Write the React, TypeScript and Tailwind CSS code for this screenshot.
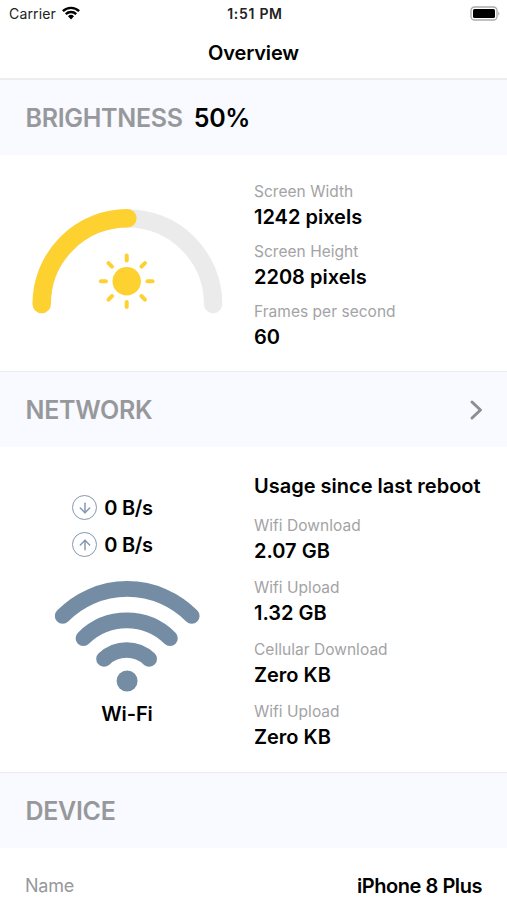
import { ArrowDown, ArrowUp } from "lucide-react";

interface IStat {
  label: string;
  value: string;
}

const screenStats: IStat[] = [
  { label: "Screen Width", value: "1242 pixels" },
  { label: "Screen Height", value: "2208 pixels" },
  { label: "Frames per second", value: "60" },
];

const usageStats: IStat[] = [
  { label: "Wifi Download", value: "2.07 GB" },
  { label: "Wifi Upload", value: "1.32 GB" },
  { label: "Cellular Download", value: "Zero KB" },
  { label: "Wifi Upload", value: "Zero KB" },
];

function StatusBar() {
  return (
    <div className="grid h-7 grid-cols-3 items-center pl-[9px] pr-[6px]">
      <div className="flex items-center gap-1.5">
        <span className="text-[14px] leading-7 tracking-[0.15px] text-[#222]">
          Carrier
        </span>
        <svg width="18" height="14" viewBox="0 0 18 14" className="mb-0.5">
          <g fill="none" stroke="#000" strokeWidth="2.4">
            <path d="M0.9 5.2 A11.5 11.5 0 0 1 17.1 5.2" />
            <path d="M3.8 8.2 A7.4 7.4 0 0 1 14.2 8.2" />
          </g>
          <path d="M6 10.3 A4.3 4.3 0 0 1 12 10.3 L9 13.4 Z" fill="#000" />
        </svg>
      </div>
      <span className="text-center text-[14px] font-semibold leading-7 tracking-[0.7px] text-[#222]">
        1:51 PM
      </span>
      <div className="flex justify-end">
        <svg width="31" height="15" viewBox="0 0 31 15" className="mb-0.5">
          <rect x="1" y="1" width="26" height="13" rx="3.5" fill="#fff" stroke="#aaa" strokeWidth="1.3" />
          <rect x="3" y="3" width="22" height="9" rx="1.5" fill="#000" />
          <path d="M28.3 5.2 Q30.6 7.5 28.3 9.8 Z" fill="#aaa" />
        </svg>
      </div>
    </div>
  );
}

function SectionHeader({
  title,
  value,
  hasLink,
}: {
  title: string;
  value?: string;
  hasLink?: boolean;
}) {
  return (
    <div className="flex h-[75px] items-center justify-between bg-[#f8faff] pl-[25.5px] pr-6">
      <h2 className="flex gap-[11px] text-[25px] font-semibold leading-8 tracking-[-0.3px] text-[#97989b]">
        <span>{title}</span>
        {value && <span className="text-black">{value}</span>}
      </h2>
      {hasLink && (
        <svg width="14" height="22" viewBox="0 0 14 22" fill="none">
          <path
            d="M3 3 L11.5 11 L3 19"
            stroke="#8e8e92"
            strokeWidth="3"
            strokeLinecap="round"
            strokeLinejoin="round"
          />
        </svg>
      )}
    </div>
  );
}

function Stat({ label, value }: IStat) {
  return (
    <div>
      <p className="text-[15.5px] leading-[26px] tracking-[0.03px] text-[#a3a3a5]">
        {label}
      </p>
      <p className="text-[20px] font-semibold leading-6 text-black">{value}</p>
    </div>
  );
}

function BrightnessGauge() {
  const rays = [0, 45, 90, 135, 180, 225, 270, 315];

  return (
    <svg width="254" height="216" viewBox="0 155 254 216" fill="none">
      <g strokeWidth="18.4" strokeLinecap="round">
        <path d="M41.7 304 A85.7 85.7 0 0 1 213.1 304" stroke="#ebebeb" />
        <path d="M41.7 304 A85.7 85.7 0 0 1 127.4 218.3" stroke="#fdd130" />
      </g>
      <circle cx="126.7" cy="281.3" r="14.2" fill="#fdd130" />
      <g stroke="#fdd130" strokeWidth="4" strokeLinecap="round">
        {rays.map((angle) => (
          <path
            key={angle}
            d="M126.7 260.5 V255.5"
            transform={`rotate(${angle} 126.7 281.3)`}
          />
        ))}
      </g>
    </svg>
  );
}

function WifiGlyph() {
  return (
    <svg width="146" height="111" viewBox="54 581 146 111" fill="none">
      <g stroke="#758ca5" strokeWidth="15.6" strokeLinecap="round">
        <path d="M62.6 616 A90.5 90.5 0 0 1 191.8 616" />
        <path d="M83.4 638.2 A61.6 61.6 0 0 1 170 638.2" />
        <path d="M104 659 A32.9 32.9 0 0 1 149.2 659" />
      </g>
      <circle cx="127.1" cy="681" r="10.5" fill="#758ca5" />
    </svg>
  );
}

function Speed({ direction }: { direction: "down" | "up" }) {
  const Icon = direction === "down" ? ArrowDown : ArrowUp;

  return (
    <div className="flex h-[37px] items-center gap-[7px]">
      <span className="flex size-[25px] items-center justify-center rounded-full border-[1.5px] border-[#8497b0]">
        <Icon className="size-4 text-[#8497b0]" strokeWidth={2.2} />
      </span>
      <span className="text-[20px] font-semibold leading-7 tracking-[-0.3px]">
        0 B/s
      </span>
    </div>
  );
}

export default function App() {
  return (
    <div className="h-[900px] w-full overflow-hidden bg-white font-['Inter',sans-serif] text-black">
      <StatusBar />
      <div className="flex h-[52px] items-center justify-center border-b-2 border-[#ececee]">
        <h1 className="text-[20px] font-semibold leading-7 tracking-[-0.15px]">
          Overview
        </h1>
      </div>

      {/* Brightness */}
      <SectionHeader title="BRIGHTNESS" value="50%" />
      <div className="flex h-[216px]">
        <BrightnessGauge />
        <div className="flex flex-col gap-2.5 pt-6">
          {screenStats.map((stat) => (
            <Stat key={stat.label} {...stat} />
          ))}
        </div>
      </div>

      {/* Network */}
      <div className="border-t border-[#ececee]">
        <SectionHeader title="NETWORK" hasLink />
      </div>
      <div className="flex h-[325px]">
        <div className="flex w-[254px] flex-col items-center pt-[42px]">
          <div className="mr-[29px]">
            <Speed direction="down" />
            <Speed direction="up" />
          </div>
          <div className="mt-[18px]">
            <WifiGlyph />
          </div>
          <p className="mt-2 text-[20px] font-semibold leading-7 tracking-[-0.1px]">
            Wi-Fi
          </p>
        </div>
        <div className="pt-[25px]">
          <h3 className="whitespace-nowrap text-[20px] font-semibold leading-7">
            Usage since last reboot
          </h3>
          <div className="mt-[12.5px] flex flex-col gap-[12.3px]">
            {usageStats.map((stat, index) => (
              <Stat key={index} {...stat} />
            ))}
          </div>
        </div>
      </div>

      {/* Device */}
      <div className="border-t border-[#ececee]">
        <SectionHeader title="DEVICE" />
      </div>
      <div className="flex h-[76px] items-center justify-between pl-[25px] pr-[25px]">
        <span className="text-[18px] leading-7 tracking-[-0.2px] text-[#97989b]">
          Name
        </span>
        <span className="text-[20px] font-semibold leading-7 tracking-[-0.45px]">
          iPhone 8 Plus
        </span>
      </div>
    </div>
  );
}
